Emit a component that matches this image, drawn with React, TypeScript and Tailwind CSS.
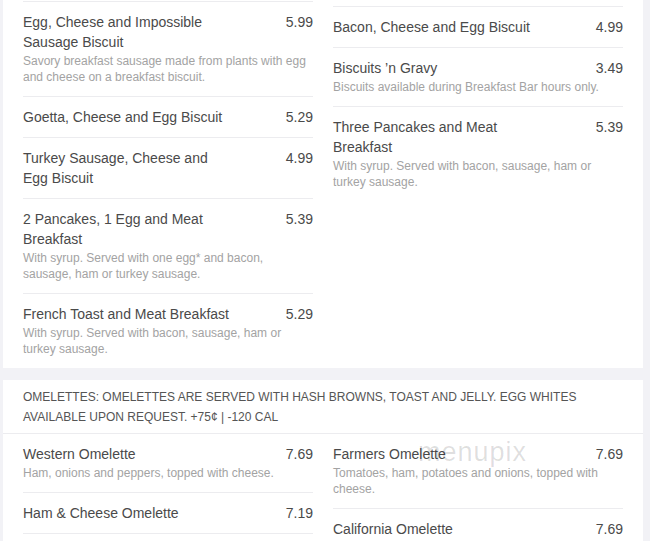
import React from "react";

type Item = { name: string; price: string; desc?: string };

const left1: Item[] = [
  {
    name: "Egg, Cheese and Impossible Sausage Biscuit",
    price: "5.99",
    desc: "Savory breakfast sausage made from plants with egg and cheese on a breakfast biscuit.",
  },
  { name: "Goetta, Cheese and Egg Biscuit", price: "5.29" },
  { name: "Turkey Sausage, Cheese and Egg Biscuit", price: "4.99" },
  {
    name: "2 Pancakes, 1 Egg and Meat Breakfast",
    price: "5.39",
    desc: "With syrup. Served with one egg* and bacon, sausage, ham or turkey sausage.",
  },
  {
    name: "French Toast and Meat Breakfast",
    price: "5.29",
    desc: "With syrup. Served with bacon, sausage, ham or turkey sausage.",
  },
];

const right1: Item[] = [
  { name: "Bacon, Cheese and Egg Biscuit", price: "4.99" },
  {
    name: "Biscuits \u2019n Gravy",
    price: "3.49",
    desc: "Biscuits available during Breakfast Bar hours only.",
  },
  {
    name: "Three Pancakes and Meat Breakfast",
    price: "5.39",
    desc: "With syrup. Served with bacon, sausage, ham or turkey sausage.",
  },
];

const left2: Item[] = [
  {
    name: "Western Omelette",
    price: "7.69",
    desc: "Ham, onions and peppers, topped with cheese.",
  },
  { name: "Ham & Cheese Omelette", price: "7.19" },
];

const right2: Item[] = [
  {
    name: "Farmers Omelette",
    price: "7.69",
    desc: "Tomatoes, ham, potatoes and onions, topped with cheese.",
  },
  { name: "California Omelette", price: "7.69" },
];

function Row({ item, last }: { item: Item; last?: boolean }) {
  return (
    <div
      className={
        "pt-[10px] pb-[10px] " + (last ? "" : "border-b border-[#ececef]")
      }
    >
      <div className="flex justify-between text-[14px] leading-[20px] text-[#4a4a4a]">
        <div className="w-[210px]">{item.name}</div>
        <div>{item.price}</div>
      </div>
      {item.desc && (
        <div className="my-[1px] text-[12px] leading-[16px] text-[#a3a3a3]">
          {item.desc}
        </div>
      )}
    </div>
  );
}

export default function App() {
  return (
    <div
      className="w-[650px] h-[541px] overflow-hidden bg-[#f2f2f6] pl-[3px] pr-[7px]"
      style={{ fontFamily: '"Liberation Sans", Arial, sans-serif' }}
    >
      <div className="bg-white px-[20px] grid grid-cols-2 gap-x-[20px]">
        <div>
          <div className="h-[2px] border-b border-[#ececef]" />
          {left1.map((it, i) => (
            <Row key={i} item={it} last={i === left1.length - 1} />
          ))}
        </div>
        <div>
          <div className="h-[7px] border-b border-[#ececef]" />
          {right1.map((it, i) => (
            <Row key={i} item={it} last={i === right1.length - 1} />
          ))}
        </div>
      </div>
      <div className="mt-[12px] bg-white relative h-[200px]">
        <div className="px-[20px] pt-[7px] pb-[6px] border-b border-[#ececef] text-[12px] leading-[20px] text-[#555] uppercase">
          Omelettes: Omelettes are served with hash browns, toast and jelly. Egg
          whites available upon request. +75¢ | -120 CAL
        </div>
        <div className="px-[20px] grid grid-cols-2 gap-x-[20px]">
          <div>
            {left2.map((it, i) => (
              <Row key={i} item={it} />
            ))}
          </div>
          <div>
            {right2.map((it, i) => (
              <Row key={i} item={it} />
            ))}
          </div>
        </div>
        <div className="absolute left-[415px] top-[57px] text-[27px] leading-[30px] tracking-[1px] font-light text-black/[0.13] pointer-events-none">
          menupix
        </div>
      </div>
    </div>
  );
}
